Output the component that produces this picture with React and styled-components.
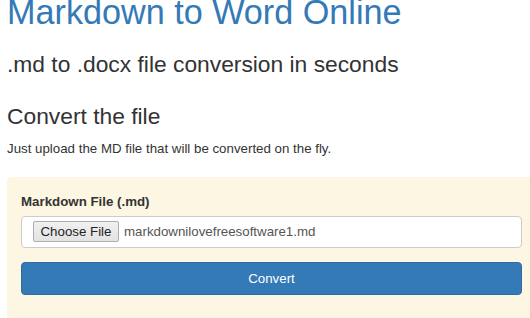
import React from "react";
import styled, { createGlobalStyle } from "styled-components";

const Global = createGlobalStyle`
  html, body { margin: 0; padding: 0; background: #fff; overflow: hidden; }
  body { font-family: "Liberation Sans", Arial, sans-serif; color: #333; }
`;

const Page = styled.div`
  width: 530px;
  height: 318px;
  overflow: hidden;
  padding-left: 7px;
  box-sizing: border-box;
`;

const Title = styled.h1`
  margin: -6px 0 0;
  font-size: 34.2px;
  line-height: 1.1;
  font-weight: 400;
  color: #337ab7;
  white-space: nowrap;
`;

const Heading = styled.h3`
  margin: ${(p) => p.$top}px 0 0;
  font-size: 22.8px;
  line-height: 1.1;
  font-weight: 400;
  color: #333;
  white-space: nowrap;
`;

const Lead = styled.p`
  margin: 10px 0 0;
  font-size: 13.3px;
  line-height: 19px;
  white-space: nowrap;
`;

const Panel = styled.div`
  margin-top: 19px;
  background: #fcf6e2;
  border-radius: 4px 0 0 0;
  padding: 15px 8px 30px 14px;
  display: flex;
  flex-direction: column;
`;

const Label = styled.label`
  font-size: 13.3px;
  line-height: 19px;
  font-weight: 700;
  color: #333;
`;

const FileField = styled.div`
  margin-top: 5px;
  height: 32px;
  box-sizing: border-box;
  background: #fff;
  border: 1px solid #ccc;
  border-radius: 4px;
  display: flex;
  align-items: center;
  padding-left: 11px;
  gap: 5px;
  font-size: 13.3px;
  color: #555;
`;

const ChooseButton = styled.span`
  height: 21px;
  box-sizing: border-box;
  width: 86px;
  display: flex;
  align-items: center;
  justify-content: center;
  border: 1px solid #adadad;
  border-radius: 2px;
  background: linear-gradient(#f0f0f0, #e3e3e3);
  color: #222;
  font-size: 13.3px;
`;

const FileName = styled.span`
  color: #555;
`;

const ConvertButton = styled.button`
  margin-top: 14px;
  height: 33px;
  width: 100%;
  border: 1px solid #2e6da4;
  border-radius: 4px;
  background: #337ab7;
  color: #fff;
  font-family: "Liberation Sans", Arial, sans-serif;
  font-size: 13.3px;
  cursor: pointer;
`;

export default function App() {
  return (
    <>
      <Global />
      <Page>
        <Title>Markdown to Word Online</Title>
        <Heading $top={20}>.md to .docx file conversion in seconds</Heading>
        <Heading $top={27}>Convert the file</Heading>
        <Lead>Just upload the MD file that will be converted on the fly.</Lead>
        <Panel>
          <Label>Markdown File (.md)</Label>
          <FileField>
            <ChooseButton>Choose File</ChooseButton>
            <FileName>markdownilovefreesoftware1.md</FileName>
          </FileField>
          <ConvertButton>Convert</ConvertButton>
        </Panel>
      </Page>
    </>
  );
}
